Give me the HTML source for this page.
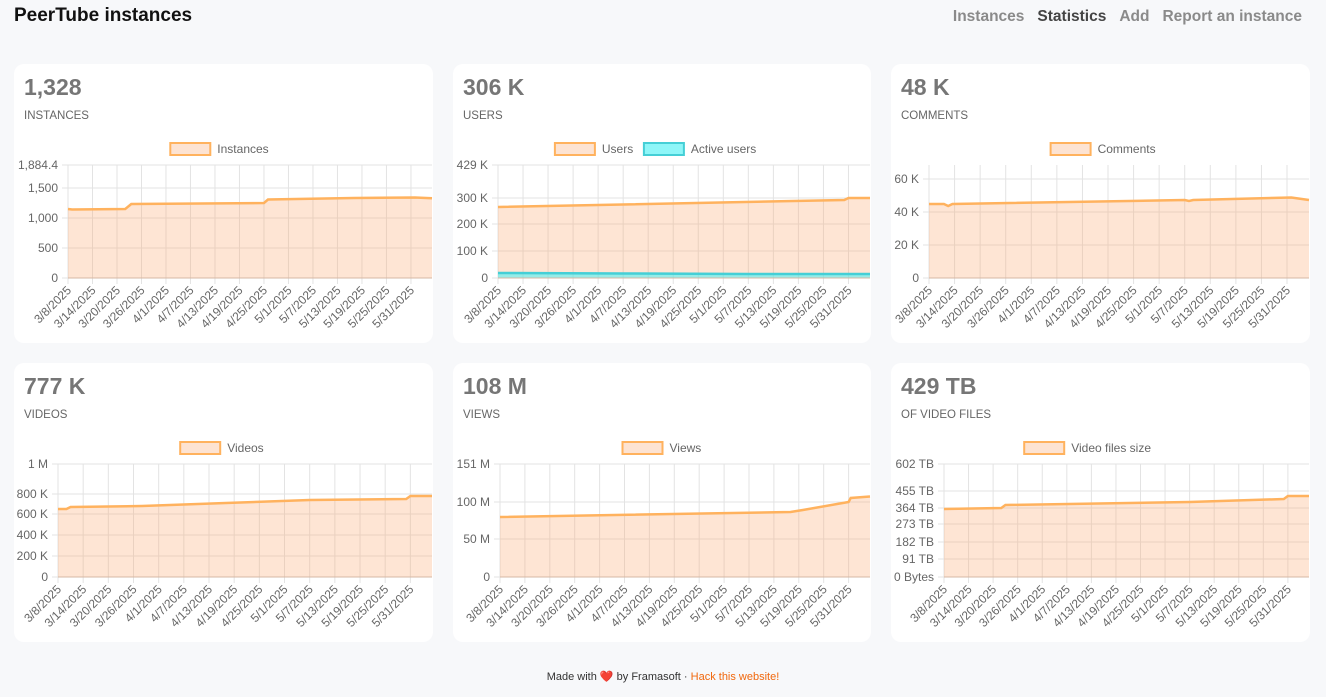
<!DOCTYPE html>
<html><head><meta charset="utf-8"><style>
body{margin:0;width:1326px;height:697px;background:#f7f8fa;font-family:"Liberation Sans",sans-serif;position:relative;overflow:hidden}
.t{position:absolute;left:14px;top:5px;font-size:19px;font-weight:bold;color:#111}
.nav{position:absolute;top:8px;right:24px;font-size:15.5px;font-weight:bold;color:#8a8a8a}
.nav span{margin-left:13px}
.card{position:absolute;width:419px;height:279px;background:#fff;border-radius:10px}
.num{position:absolute;left:10px;top:10px;font-size:23px;font-weight:bold;color:#767676}
.lab{position:absolute;left:10px;top:46px;font-size:11.5px;color:#666}
.foot{position:absolute;top:670px;left:0;width:1326px;text-align:center;font-size:11px;color:#333}
.foot a{color:#f1680d;text-decoration:none}
svg{position:absolute;left:0;top:0}
</style></head><body>
<div class="t">PeerTube instances</div>
<div class="nav"><span>Instances</span><span style="color:#444">Statistics</span><span>Add</span><span>Report an instance</span></div>
<div class="card" style="left:14px;top:64px"><div class="num">1,328</div><div class="lab">INSTANCES</div></div>
<div class="card" style="left:453px;top:64px;width:418px"><div class="num">306 K</div><div class="lab">USERS</div></div>
<div class="card" style="left:891px;top:64px"><div class="num">48 K</div><div class="lab">COMMENTS</div></div>
<div class="card" style="left:14px;top:363px"><div class="num">777 K</div><div class="lab">VIDEOS</div></div>
<div class="card" style="left:453px;top:363px;width:418px"><div class="num">108 M</div><div class="lab">VIEWS</div></div>
<div class="card" style="left:891px;top:363px"><div class="num">429 TB</div><div class="lab">OF VIDEO FILES</div></div>
<div class="foot">Made with <span style="color:#e53935">❤️</span> by Framasoft · <a>Hack this website!</a></div>
<svg id="s" width="1326" height="697" font-family="Liberation Sans, sans-serif"></svg>
<script>
var C=[
{L:68,R:432,T:165,B:278,cx:223,ly:149,leg:[["Instances"]],y:[["1,884.4",165],["1,500",188],["1,000",218],["500",248],["0",278]],d:[[[0,209],[1,209.5],[14,209],[15.5,204],[48,203],[49,199.5],[70,198],[85,197.5],[89.2,198.3]]]},
{L:498,R:870,T:165,B:278,cx:662,ly:149,leg:[["Users"],["Active users",1]],y:[["429 K",165],["300 K",198],["200 K",224],["100 K",251],["0",278]],d:[[[0,207],[83,200],[84,198],[89.2,198]],[[0,273],[30,273.5],[60,274],[89.2,274]]]},
{L:929,R:1309,T:165,B:278,cx:1100,ly:149,leg:[["Comments"]],y:[["60 K",179],["40 K",212],["20 K",245],["0",278]],d:[[[0,204],[3.5,204],[4.5,206],[5.5,204],[60,200],[61,201],[62,200],[85,197.5],[89.2,200]]]},
{L:58,R:432,T:464,B:577,cx:223,ly:448,leg:[["Videos"]],y:[["1 M",464],["800 K",494],["600 K",514],["400 K",535],["200 K",556],["0",577]],d:[[[0,509],[2,509],[3,507],[20,506],[40,503],[60,500],[83,499],[84,496],[89.2,496]]]},
{L:500,R:870,T:464,B:577,cx:662,ly:448,leg:[["Views"]],y:[["151 M",464],["100 M",502],["50 M",539],["0",577]],d:[[[0,517],[70,512],[73,510],[84,502],[84.5,498],[89.2,496.5]]]},
{L:944,R:1309,T:464,B:577,cx:1100,ly:448,leg:[["Video files size"]],y:[["602 TB",464],["455 TB",491],["364 TB",508],["273 TB",524],["182 TB",542],["91 TB",559],["0 Bytes",577]],d:[[[0,509],[14,508],[15,505],[60,502],[83,499],[84,496],[89.2,496]]]}
];
var lbl=["3/8/2025","3/14/2025","3/20/2025","3/26/2025","4/1/2025","4/7/2025","4/13/2025","4/19/2025","4/25/2025","5/1/2025","5/7/2025","5/13/2025","5/19/2025","5/25/2025","5/31/2025"];
var h="";
C.forEach(function(c){
 var sp=(c.R-c.L)/14.86,dx=sp/6;
 c.y.forEach(function(t){h+='<line x1="'+(c.L-6)+'" x2="'+c.R+'" y1="'+t[1]+'" y2="'+t[1]+'" stroke="#e3e3e3"/>';
 h+='<text x="'+(c.L-10)+'" y="'+(t[1]+4)+'" font-size="12" fill="#666" text-anchor="end">'+t[0]+'</text>';});
 h+='<line x1="'+c.L+'" x2="'+c.L+'" y1="'+c.T+'" y2="'+(c.B+6)+'" stroke="#ccc"/>';
 for(var i=0;i<15;i++){var x=c.L+i*sp;
  h+='<line x1="'+x+'" x2="'+x+'" y1="'+c.T+'" y2="'+(c.B+6)+'" stroke="#e3e3e3"/>';
  h+='<text transform="translate('+(x+4)+','+(c.B+13)+') rotate(-45)" font-size="12" fill="#666" text-anchor="end">'+lbl[i]+'</text>';}
 c.d.forEach(function(d,k){var p=d.map(function(q){return Math.min(c.R,c.L+q[0]*dx).toFixed(1)+','+q[1]}).join(' ');
  var fill=k?'rgba(80,240,245,0.6)':'rgba(250,160,100,0.28)',st=k?'#45cfd6':'#ffb25e';
  h+='<polygon points="'+c.L+','+c.B+' '+p+' '+c.R+','+c.B+'" fill="'+fill+'"/>';
  h+='<polyline points="'+p+'" fill="none" stroke="'+st+'" stroke-width="2.5"/>';});
 h+='<line x1="'+c.L+'" x2="'+c.R+'" y1="'+c.B+'" y2="'+c.B+'" stroke="#d5b8a5"/>';
 var w=c.leg.map(function(l){return 46+l[0].length*6.6});var tot=w.reduce(function(a,b){return a+b+10},-10);var x0=c.cx-tot/2;
 c.leg.forEach(function(l,k){h+='<rect x="'+x0+'" y="'+(c.ly-6)+'" width="40" height="12" fill="'+(l[1]?'#8ef6f8':'#fde3d2')+'" stroke="'+(l[1]?'#45cfd6':'#ffb25e')+'" stroke-width="2"/>';
  h+='<text x="'+(x0+47)+'" y="'+(c.ly+4)+'" font-size="12" fill="#666">'+l[0]+'</text>';x0+=w[k]+10;});
});
document.getElementById('s').innerHTML=h;
</script>
</body></html>
